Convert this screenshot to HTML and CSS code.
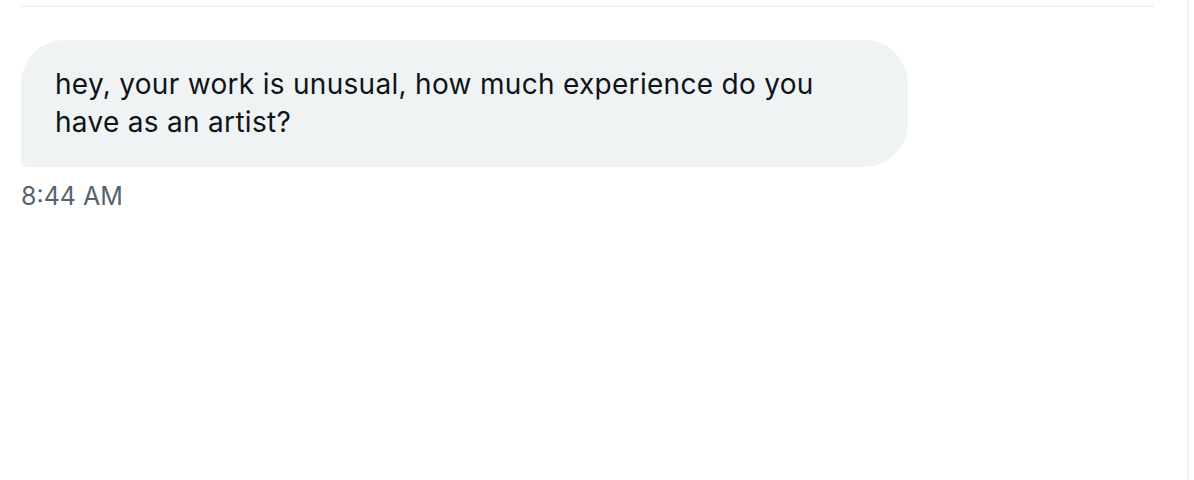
FILE: index.html
```html
<!DOCTYPE html>
<html>
<head>
<meta charset="utf-8">
<link rel="stylesheet" href="styles.css">
</head>
<body>
<div class="page">
  <main class="thread">
    <div class="divider"></div>
    <div class="message">
      <div class="bubble">hey, your work is unusual, how much experience do you have as an artist?</div>
      <div class="time">8:44 AM</div>
    </div>
  </main>
  <div class="edge"></div>
</div>
</body>
</html>
```

FILE: styles.css
```css
html, body {
  margin: 0;
  padding: 0;
  background: #ffffff;
}
.page {
  display: flex;
  width: 1194px;
  height: 480px;
}
.thread {
  flex: 0 0 1189px;
  border-right: 2px solid #eff3f4;
  box-sizing: border-box;
  padding: 5px 0 0 21px;
  font-family: Inter, "Noto Sans", sans-serif;
}
.divider {
  width: 1133px;
  height: 2px;
  background: #eff3f4;
  border-radius: 1px;
}
.message {
  margin-top: 33px;
}
.bubble {
  width: 887px;
  box-sizing: border-box;
  background: #eff3f4;
  color: #0f1419;
  font-size: 28px;
  font-weight: 400;
  letter-spacing: 0.3px;
  line-height: 38px;
  padding: 25px 63px 26px 34px;
  border-radius: 44px 44px 44px 6px;
}
.time {
  margin-top: 14px;
  color: #536471;
  font-size: 25px;
  line-height: 30px;
}
```
